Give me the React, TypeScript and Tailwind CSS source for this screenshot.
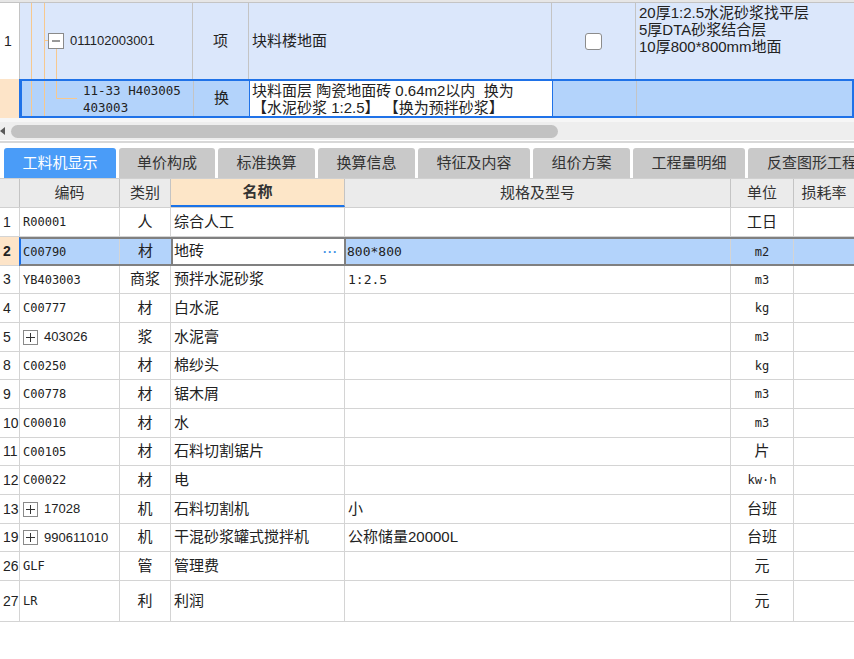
import React from 'react';

const cjk = "font-['Liberation_Sans','Noto_Sans_CJK_SC',sans-serif]";
const mono = "font-['DejaVu_Sans_Mono','Noto_Sans_CJK_SC',monospace]";

type Row = {
  n: string;
  code: string;
  plus?: boolean;
  type: string;
  name: string;
  spec?: string;
  unit: string;
  h: string;
  sel?: boolean;
};

const rows: Row[] = [
  { n: '1', code: 'R00001', type: '人', name: '综合人工', unit: '工日', h: 'h-[29px]' },
  { n: '2', code: 'C00790', type: '材', name: '地砖', spec: '800*800', unit: 'm2', h: 'h-[29px]', sel: true },
  { n: '3', code: 'YB403003', type: '商浆', name: '预拌水泥砂浆', spec: '1:2.5', unit: 'm3', h: 'h-[28px]' },
  { n: '4', code: 'C00777', type: '材', name: '白水泥', unit: 'kg', h: 'h-[29px]' },
  { n: '5', code: '403026', plus: true, type: '浆', name: '水泥膏', unit: 'm3', h: 'h-[29px]' },
  { n: '8', code: 'C00250', type: '材', name: '棉纱头', unit: 'kg', h: 'h-[28px]' },
  { n: '9', code: 'C00778', type: '材', name: '锯木屑', unit: 'm3', h: 'h-[29px]' },
  { n: '10', code: 'C00010', type: '材', name: '水', unit: 'm3', h: 'h-[29px]' },
  { n: '11', code: 'C00105', type: '材', name: '石料切割锯片', unit: '片', h: 'h-[28px]' },
  { n: '12', code: 'C00022', type: '材', name: '电', unit: 'kw·h', h: 'h-[29px]' },
  { n: '13', code: '17028', plus: true, type: '机', name: '石料切割机', spec: '小', unit: '台班', h: 'h-[29px]' },
  { n: '19', code: '990611010', plus: true, type: '机', name: '干混砂浆罐式搅拌机', spec: '公称储量20000L', unit: '台班', h: 'h-[28px]' },
  { n: '26', code: 'GLF', type: '管', name: '管理费', unit: '元', h: 'h-[29px]' },
  { n: '27', code: 'LR', type: '利', name: '利润', unit: '元', h: 'h-[41px]' },
];

const tabs = [
  { label: '工料机显示', w: 'w-[112px]' },
  { label: '单价构成', w: 'w-[96px]' },
  { label: '标准换算', w: 'w-[97px]' },
  { label: '换算信息', w: 'w-[97px]' },
  { label: '特征及内容', w: 'w-[112px]' },
  { label: '组价方案', w: 'w-[97px]' },
  { label: '工程量明细', w: 'w-[112px]' },
];

const PlusBox = () => (
  <span className="w-[15px] h-[15px] border border-[#8a8a8a] bg-white flex items-center justify-center shrink-0">
    <svg width="9" height="9" viewBox="0 0 9 9">
      <path d="M0 4.5h9M4.5 0v9" stroke="#333" strokeWidth="1" />
    </svg>
  </span>
);

const unitFont = (u: string) => (/^[a-z·]+\d?$/.test(u) ? `${mono} text-[12px]` : `${cjk} text-[15px]`);

const DataRow = ({ r }: { r: Row }) => {
  const line = 'border-r border-[#d4d4d4]';
  if (r.sel) {
    return (
      <div className={`flex ${r.h}`}>
        <div className={`w-[19px] shrink-0 bg-[#fde4c8] border-b border-[#d4d4d4] flex items-center pl-[3px] text-[14px] font-bold text-[#222] ${cjk}`}>
          {r.n}
        </div>
        <div className="flex flex-1 border-y-2 border-[#808080] border-l-2 border-l-[#1a6ee6] bg-[#b3d3fb]">
          <div className={`w-[99px] shrink-0 ${line} flex items-center pl-[2px] text-[12px] text-[#222] ${mono}`}>{r.code}</div>
          <div className={`w-[51px] shrink-0 flex items-center justify-center text-[15px] text-[#222] ${cjk}`}>{r.type}</div>
          <div className={`w-[175px] shrink-0 bg-white border-x-2 border-[#808080] flex items-center justify-between pl-[1px] pr-[6px] text-[15px] text-[#222] ${cjk}`}>
            <span>{r.name}</span>
            <span className="text-[#3b8fe6] font-bold tracking-[1px] text-[12px]">···</span>
          </div>
          <div className={`w-[385px] shrink-0 ${line} flex items-center pl-[1px] text-[13px] text-[#222] ${mono}`}>{r.spec}</div>
          <div className={`w-[63px] shrink-0 ${line} flex items-center justify-center text-[#222] ${unitFont(r.unit)}`}>{r.unit}</div>
          <div className="flex-1" />
        </div>
      </div>
    );
  }
  return (
    <div className={`flex ${r.h} border-b border-[#d4d4d4]`}>
      <div className={`w-[20px] shrink-0 ${line} flex items-center pl-[3px] text-[14px] text-[#222] ${cjk}`}>{r.n}</div>
      <div className={`w-[100px] shrink-0 ${line} flex items-center pl-[3px] text-[#222]`}>
        {r.plus ? (
          <span className="flex items-center gap-[6px]">
            <PlusBox />
            <span className={`text-[13px] ${cjk}`}>{r.code}</span>
          </span>
        ) : (
          <span className={`text-[12px] ${mono}`}>{r.code}</span>
        )}
      </div>
      <div className={`w-[51px] shrink-0 ${line} flex items-center justify-center text-[15px] text-[#222] ${cjk}`}>{r.type}</div>
      <div className={`w-[174px] shrink-0 ${line} flex items-center pl-[3px] text-[15px] text-[#222] ${cjk}`}>{r.name}</div>
      <div className={`w-[386px] shrink-0 ${line} flex items-center pl-[3px] text-[#222] ${r.spec && /^[\d:.*]+$/.test(r.spec) ? `${mono} text-[13px]` : `${cjk} text-[15px]`}`}>
        {r.spec}
      </div>
      <div className={`w-[63px] shrink-0 ${line} flex items-center justify-center text-[#222] ${unitFont(r.unit)}`}>{r.unit}</div>
      <div className="flex-1" />
    </div>
  );
};

export default function App() {
  const gl = 'border-r border-[#c4c4c4]';
  return (
    <div className={`w-[854px] h-[659px] bg-white overflow-hidden text-[#222] ${cjk}`}>
      {/* upper grid: item + sub-item */}
      <div className="h-[3px] bg-[#e6e6e6] border-b border-[#c4c4c4]" />
      <div className="flex h-[76px] bg-[#dbe7fb]">
        <div className={`w-[20px] shrink-0 bg-white ${gl} flex items-center pl-[4px] text-[14px]`}>1</div>
        <div className={`w-[173px] shrink-0 ${gl} relative flex items-center pl-[50px] text-[13px]`}>
          <svg className="absolute inset-0" width="100%" height="100%">
            <path d="M11.5 0V76M24.5 0V76M24 37.5H28M36.5 45V76" stroke="#f7c88e" strokeWidth="1" fill="none" />
            <rect x="28.5" y="30.5" width="15" height="15" fill="white" stroke="#8a8a8a" />
            <path d="M32 38H40" stroke="#333" strokeWidth="1" />
          </svg>
          <span className="relative">011102003001</span>
        </div>
        <div className={`w-[56px] shrink-0 ${gl} flex items-center justify-center text-[15px]`}>项</div>
        <div className={`w-[303px] shrink-0 ${gl} flex items-center pl-[3px] text-[15px]`}>块料楼地面</div>
        <div className={`w-[84px] shrink-0 ${gl} flex items-center justify-center`}>
          <span className="w-[17px] h-[17px] rounded-[3px] border border-[#8c8c8c] bg-white" />
        </div>
        <div className="flex-1 pl-[3px] pt-[1px] text-[15px] leading-[17px]">
          <div>20厚1:2.5水泥砂浆找平层</div>
          <div>5厚DTA砂浆结合层</div>
          <div>10厚800*800mm地面</div>
        </div>
      </div>
      <div className="flex h-[39px]">
        <div className="w-[19px] shrink-0 bg-[#fde4c8]" />
        <div className="flex flex-1 border-2 border-l-[3px] border-[#1f72e8] bg-[#b3d3fb]">
          <div className="w-[172px] shrink-0 border-r border-[#c4c4c4] relative flex items-center pl-[61px]">
            <svg className="absolute inset-0" width="100%" height="100%">
              <path d="M9.5 -2V40M22.5 -2V40M34.5 -2V17.5H55" stroke="#f7c88e" strokeWidth="1" fill="none" />
            </svg>
            <div className={`relative text-[12.5px] leading-[17px] ${mono}`}>
              <div>11-33 H403005</div>
              <div>403003</div>
            </div>
          </div>
          <div className="w-[56px] shrink-0 border-r border-[#1f72e8] flex items-center justify-center text-[15px]">换</div>
          <div className="w-[303px] shrink-0 bg-white border-r border-[#1f72e8] flex flex-col justify-center pl-[2px] text-[15px] leading-[17px] whitespace-pre">
            <div>块料面层 陶瓷地面砖 0.64m2以内  换为</div>
            <div>【水泥砂浆 1:2.5】 【换为预拌砂浆】</div>
          </div>
          <div className="w-[84px] shrink-0 border-r border-[#c4c4c4]" />
          <div className="flex-1" />
        </div>
      </div>

      {/* horizontal scrollbar */}
      <div className="h-[4px] bg-[#f6f6f6]" />
      <div className="h-[18px] bg-[#eeeeee] flex items-center">
        <div className="w-[11px] shrink-0 flex items-center">
          <svg width="6" height="8" viewBox="0 0 6 8">
            <path d="M5 0L0 4L5 8Z" fill="#5a5a5a" />
          </svg>
        </div>
        <div className="w-[547px] h-[13px] rounded-full bg-[#c2c2c2]" />
      </div>
      <div className="h-[8px] pt-[1px]">
        <div className="h-[2px] bg-[#d8d8d8]" />
      </div>

      {/* tabs */}
      <div className="h-[30px] flex gap-[3px] pl-[4px] overflow-hidden">
        {tabs.map((t, i) => (
          <div
            key={t.label}
            className={`${t.w} shrink-0 rounded-t-[3px] flex items-center justify-center text-[15px] ${
              i === 0 ? 'bg-[#4a9cf8] text-white' : 'bg-[#c9c9c9] text-[#333]'
            }`}
          >
            {t.label}
          </div>
        ))}
        <div className="w-[130px] shrink-0 rounded-t-[3px] bg-[#c9c9c9] text-[#333] flex items-center pl-[19px] text-[15px] whitespace-nowrap">
          反查图形工程量
        </div>
      </div>

      {/* header */}
      <div className="flex h-[30px] bg-[#ebebeb] border-y border-[#d0d0d0] text-[15px] text-[#333]">
        <div className={`w-[20px] shrink-0 ${gl}`} />
        <div className={`w-[100px] shrink-0 ${gl} flex items-center justify-center`}>编码</div>
        <div className={`w-[51px] shrink-0 ${gl} flex items-center justify-center`}>类别</div>
        <div className={`w-[174px] shrink-0 ${gl} bg-[#fde6c8] border-b-2 border-b-[#1a73e8] flex items-center justify-center font-bold`}>名称</div>
        <div className={`w-[386px] shrink-0 ${gl} flex items-center justify-center`}>规格及型号</div>
        <div className={`w-[63px] shrink-0 ${gl} flex items-center justify-center`}>单位</div>
        <div className="flex-1 flex items-center justify-center">损耗率</div>
      </div>

      {/* resource rows */}
      {rows.map((r) => (
        <DataRow key={r.n} r={r} />
      ))}
    </div>
  );
}
